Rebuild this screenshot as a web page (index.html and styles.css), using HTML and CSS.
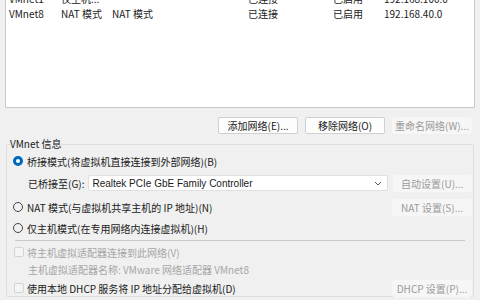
FILE: index.html
```html
<!DOCTYPE html>
<html lang="zh-CN">
<head>
<meta charset="utf-8">
<title>虚拟网络编辑器</title>
<link rel="stylesheet" href="styles.css">
</head>
<body>
<div class="list">
  <div class="rows">
    <div class="row"><span>VMnet1</span><span>仅主机...</span><span></span><span>已连接</span><span>已启用</span><span>192.168.100.0</span></div>
    <div class="row"><span>VMnet8</span><span>NAT 模式</span><span>NAT 模式</span><span>已连接</span><span>已启用</span><span>192.168.40.0</span></div>
  </div>
</div>
<div class="actions">
  <button class="btn">添加网络(E)...</button>
  <button class="btn">移除网络(O)</button>
  <button class="btn disabled">重命名网络(W)...</button>
</div>
<fieldset class="group">
  <legend>VMnet 信息</legend>
  <div class="line r1">
    <span class="radio checked"></span><span class="lbl">桥接模式(将虚拟机直接连接到外部网络)(B)</span>
  </div>
  <div class="line r2">
    <span class="lbl sub">已桥接至(G):</span>
    <div class="select"><span>Realtek PCIe GbE Family Controller</span>
      <svg width="8" height="5" viewBox="0 0 8 5"><path d="M1 1l3 3 3-3" fill="none" stroke="#555" stroke-width="1"/></svg>
    </div>
    <button class="btn disabled">自动设置(U)...</button>
  </div>
  <div class="line r3">
    <span class="radio"></span><span class="lbl">NAT 模式(与虚拟机共享主机的 IP 地址)(N)</span>
    <button class="btn disabled push">NAT 设置(S)...</button>
  </div>
  <div class="line r4">
    <span class="radio"></span><span class="lbl">仅主机模式(在专用网络内连接虚拟机)(H)</span>
  </div>
  <div class="sep"></div>
  <div class="line r5">
    <span class="check"></span><span class="lbl grey">将主机虚拟适配器连接到此网络(V)</span>
  </div>
  <div class="line r6">
    <span class="lbl grey sub">主机虚拟适配器名称: VMware 网络适配器 VMnet8</span>
  </div>
  <div class="line r7">
    <span class="check"></span><span class="lbl">使用本地 DHCP 服务将 IP 地址分配给虚拟机(D)</span>
    <button class="btn disabled push">DHCP 设置(P)...</button>
  </div>
</fieldset>
</body>
</html>
```
FILE: styles.css
```css
html, body {
  margin: 0;
  padding: 0;
  background: #f0f0f0;
  font-family: "Noto Sans CJK SC", "Microsoft YaHei", sans-serif;
  font-size: 10px;
  color: #1a1a1a;
  overflow: hidden;
  width: 480px;
  height: 300px;
}
.list {
  margin: 0 5px;
  height: 107px;
  background: #ffffff;
  border: 1px solid #c8c8c8;
  border-top: none;
  overflow: hidden;
}
.rows {
  margin-top: -9px;
  padding-left: 3px;
}
.row {
  display: grid;
  grid-template-columns: 52px 51px 136px 85px 51px 1fr;
  height: 15px;
  line-height: 15px;
  white-space: nowrap;
}
.actions {
  display: flex;
  justify-content: flex-end;
  gap: 7px;
  margin: 9px 8px 0 0;
}
.btn {
  width: 80px;
  height: 17px;
  padding: 0;
  margin: 0;
  border: 1px solid #d0d0d0;
  border-radius: 2px;
  background: #fdfdfd;
  font: inherit;
  font-size: 10px;
  line-height: 15px;
  color: #1a1a1a;
  white-space: nowrap;
}
.btn.disabled {
  background: #f6f6f6;
  border-color: #f6f6f6;
  color: #9a9a9a;
}
.group {
  margin: 3px 6px 0 6px;
  padding: 0 1px 0 6px;
  border: 1px solid #dedede;
  border-radius: 2px;
  min-width: 0;
}
.group legend {
  padding: 0;
  margin-left: -3px;
  line-height: 14px;
  height: 14px;
  color: #1a1a1a;
}
.line {
  display: flex;
  align-items: center;
  height: 16px;
  white-space: nowrap;
}
.r1 { height: 20px; }
.r2 { margin-top: 4px; }
.r3 { margin-top: 8px; }
.r4 { margin-top: 5px; }
.r5 { margin-top: 3px; }
.r6 { margin-top: 1px; }
.r7 { margin-top: 3px; }
.sep {
  height: 1px;
  background: #c8c8c8;
  margin: 4px 7px 0 2px;
}
.radio {
  width: 10px;
  height: 10px;
  box-sizing: border-box;
  border: 1px solid #444;
  border-radius: 50%;
  margin-right: 4px;
  flex: none;
}
.radio.checked {
  border: 3px solid #0067c0;
  background: #fff;
}
.check {
  width: 10px;
  height: 10px;
  box-sizing: border-box;
  border: 1px solid #d4d4d4;
  border-radius: 2px;
  background: #f4f4f4;
  margin: 0 3px 0 1px;
  flex: none;
}
.lbl.sub { margin-left: 15px; }
.lbl.grey { color: #a6a6a6; }
.select {
  margin-left: 4px;
  width: 301px;
  height: 16px;
  box-sizing: border-box;
  background: #fff;
  border: 1px solid #e0e0e0;
  border-radius: 2px;
  display: flex;
  align-items: center;
  justify-content: space-between;
  padding: 0 5px 0 3px;
  font-family: "Liberation Sans", "Noto Sans CJK SC", sans-serif;
  font-size: 10px;
}
.r2 .btn { margin-left: 5px; }
.push { margin-left: auto; }
```
